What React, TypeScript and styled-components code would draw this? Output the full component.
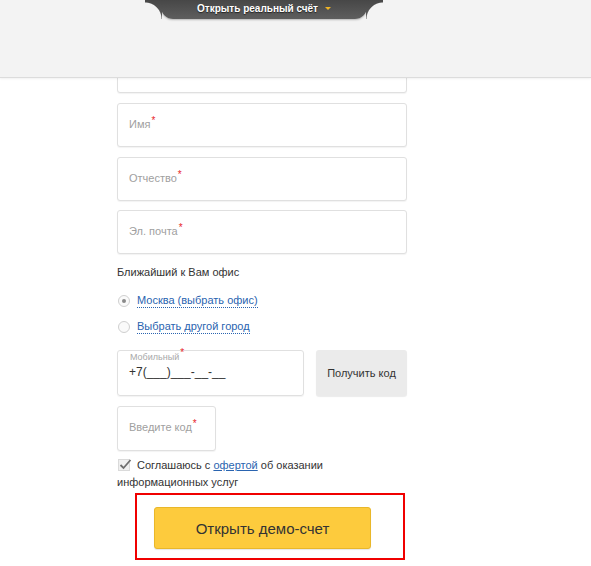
import { styled, createGlobalStyle } from "styled-components";

const GlobalStyle = createGlobalStyle`
  html, body {
    margin: 0;
    padding: 0;
    background: #ffffff;
    font-family: "Liberation Sans", Arial, sans-serif;
    color: #333333;
  }
`;

const Page = styled.div`
  position: relative;
  width: 591px;
  min-height: 566px;
  overflow: hidden;
`;

const Header = styled.div`
  position: absolute;
  top: 0;
  left: 0;
  right: 0;
  height: 77px;
  background: #f3f3f3;
  border-bottom: 1px solid #dcdcdc;
  box-shadow: 0 1px 2px rgba(0, 0, 0, 0.06);
  z-index: 2;
`;

const TabRow = styled.div`
  width: 290px;
  margin-left: 117px;
  display: flex;
  justify-content: center;
`;

const tabFill = "linear-gradient(#474747, #5e5e5e)";

const Tab = styled.div`
  position: relative;
  width: 206px;
  height: 19px;
  margin-left: 4px;
  background: ${tabFill};
  border-radius: 0 0 12px 12px;
  box-shadow: 0 1px 2px rgba(0, 0, 0, 0.25);
  display: flex;
  align-items: center;
  justify-content: center;
  gap: 7px;

  &::before,
  &::after {
    content: "";
    position: absolute;
    top: 0;
    width: 17px;
    height: 19px;
    background: ${tabFill};
  }
  &::before {
    left: -16px;
    -webkit-mask-image: radial-gradient(circle at 0 100%, transparent 16px, #000 17px);
    mask-image: radial-gradient(circle at 0 100%, transparent 16px, #000 17px);
  }
  &::after {
    right: -16px;
    -webkit-mask-image: radial-gradient(circle at 100% 100%, transparent 16px, #000 17px);
    mask-image: radial-gradient(circle at 100% 100%, transparent 16px, #000 17px);
  }
`;

const TabText = styled.span`
  font-size: 10px;
  font-weight: bold;
  color: #ffffff;
  text-shadow: 0 1px 1px rgba(0, 0, 0, 0.6);
  margin-top: -2px;
`;

const Caret = styled.span`
  width: 0;
  height: 0;
  border-left: 3px solid transparent;
  border-right: 3px solid transparent;
  border-top: 3px solid #f2b625;
  margin-top: -2px;
`;

const Form = styled.div`
  width: 290px;
  margin-left: 117px;
  padding-top: 49px;
  display: flex;
  flex-direction: column;
`;

const Field = styled.div<{ $width?: number; $height?: number; $gap?: number }>`
  box-sizing: border-box;
  width: ${(p) => (p.$width ? `${p.$width}px` : "100%")};
  height: ${(p) => p.$height ?? 44}px;
  border: 1px solid #e0e0e0;
  border-radius: 3px;
  box-shadow: 0 1px 1px rgba(0, 0, 0, 0.05);
  background: #ffffff;
  padding: 14px 11px 0;
  margin-bottom: ${(p) => p.$gap ?? 10}px;
  font-size: 11px;
  color: #a0a0a0;
  white-space: nowrap;
`;

const Required = styled.sup`
  color: #e8262a;
  font-size: 10px;
  margin-left: 1px;
  vertical-align: 4px;
  line-height: 0;
`;

const SectionTitle = styled.div`
  font-size: 11px;
  color: #333333;
  margin: 2px 0 16px;
`;

const RadioRow = styled.label`
  display: flex;
  align-items: center;
  gap: 7px;
  height: 14px;
  margin-bottom: 12px;
  font-size: 11px;
`;

const Radio = styled.span<{ $checked?: boolean }>`
  box-sizing: border-box;
  width: 12px;
  height: 12px;
  margin-left: 1px;
  border-radius: 50%;
  border: 1px solid #cfcfcf;
  background: #fafafa;
  display: flex;
  align-items: center;
  justify-content: center;

  &::after {
    content: "";
    width: 4px;
    height: 4px;
    border-radius: 50%;
    background: ${(p) => (p.$checked ? "#8a8a8a" : "transparent")};
  }
`;

const DottedLink = styled.span`
  color: #2a64b0;
  border-bottom: 1px dotted #2a64b0;
  line-height: 13px;
`;

const PhoneRow = styled.div`
  display: flex;
  justify-content: space-between;
  margin-top: 4px;
  margin-bottom: 10px;
`;

const PhoneField = styled.div`
  box-sizing: border-box;
  width: 187px;
  height: 46px;
  border: 1px solid #e0e0e0;
  border-radius: 3px;
  box-shadow: 0 1px 1px rgba(0, 0, 0, 0.05);
  padding: 1px 11px 0;
`;

const PhoneLabel = styled.div`
  font-size: 9px;
  color: #a8a8a8;
  margin-left: 1px;
`;

const PhoneValue = styled.div`
  font-size: 12px;
  color: #333333;
  margin-top: 3px;
`;

const CodeButton = styled.button`
  box-sizing: border-box;
  width: 91px;
  height: 46px;
  border: none;
  border-radius: 3px;
  background: #ebebeb;
  box-shadow: 0 1px 1px rgba(0, 0, 0, 0.08);
  font-family: "Liberation Sans", Arial, sans-serif;
  font-size: 11px;
  color: #333333;
  padding: 0;
`;

const AgreeRow = styled.div`
  position: relative;
  font-size: 11px;
  line-height: 17px;
  color: #333333;
  text-indent: 20px;
`;

const CheckIcon = styled.svg`
  position: absolute;
  left: 1px;
  top: 1px;
`;

const Link = styled.span`
  color: #2a64b0;
  text-decoration: underline;
`;

const SubmitFrame = styled.div`
  box-sizing: border-box;
  width: 270px;
  height: 67px;
  margin: 2px 0 0 18px;
  border: 2px solid #f00000;
  padding: 12px 0 0 17px;
`;

const SubmitButton = styled.button`
  box-sizing: border-box;
  width: 217px;
  height: 42px;
  border: 1px solid #e9b72a;
  border-radius: 3px;
  background: #fdcb3d;
  box-shadow: 0 1px 1px rgba(0, 0, 0, 0.1);
  font-family: "Liberation Sans", Arial, sans-serif;
  font-size: 15px;
  color: #333333;
  padding: 0;
`;

const App = () => {
  return (
    <Page>
      <GlobalStyle />
      <Header>
        <TabRow>
          <Tab>
            <TabText>Открыть реальный счёт</TabText>
            <Caret />
          </Tab>
        </TabRow>
      </Header>
      <Form>
        <Field>Фамилия<Required>*</Required></Field>
        <Field>Имя<Required>*</Required></Field>
        <Field $gap={9}>Отчество<Required>*</Required></Field>
        <Field>Эл. почта<Required>*</Required></Field>
        <SectionTitle>Ближайший к Вам офис</SectionTitle>
        <RadioRow>
          <Radio $checked />
          <DottedLink>Москва (выбрать офис)</DottedLink>
        </RadioRow>
        <RadioRow>
          <Radio />
          <DottedLink>Выбрать другой город</DottedLink>
        </RadioRow>
        <PhoneRow>
          <PhoneField>
            <PhoneLabel>Мобильный<Required>*</Required></PhoneLabel>
            <PhoneValue>+7(___)___-__-__</PhoneValue>
          </PhoneField>
          <CodeButton>Получить код</CodeButton>
        </PhoneRow>
        <Field $width={99} $height={45} $gap={6}>
          Введите код<Required>*</Required>
        </Field>
        <AgreeRow>
          <CheckIcon width="14" height="14" viewBox="0 0 14 14">
            <rect x="0.5" y="1.5" width="11" height="11" fill="#efefef" stroke="#dadada" />
            <path d="M2.5 7 L5.5 10 L12.5 2" fill="none" stroke="#6e6e6e" strokeWidth="1.8" />
          </CheckIcon>
          Соглашаюсь с <Link>офертой</Link> об оказании информационных услуг
        </AgreeRow>
        <SubmitFrame>
          <SubmitButton>Открыть демо-счет</SubmitButton>
        </SubmitFrame>
      </Form>
    </Page>
  );
};

export default App;
